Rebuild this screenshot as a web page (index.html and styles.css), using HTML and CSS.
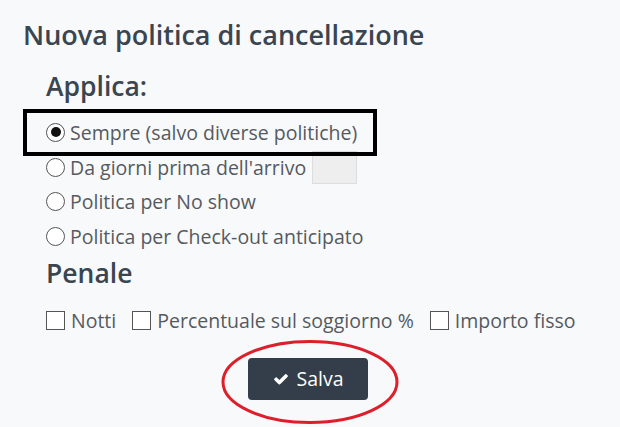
FILE: index.html
```html
<!DOCTYPE html>
<html lang="it">
<head>
<meta charset="utf-8">
<title>Nuova politica di cancellazione</title>
<link rel="stylesheet" href="styles.css">
</head>
<body>
<div class="page">
  <h1 class="title">Nuova politica di cancellazione</h1>
  <section class="block">
    <h2 class="label">Applica:</h2>
    <ul class="options">
      <li class="opt opt-marked"><span class="radio radio-on"></span>Sempre (salvo diverse politiche)</li>
      <li class="opt"><span class="radio"></span>Da giorni prima dell'arrivo <span class="days-input"></span></li>
      <li class="opt"><span class="radio"></span>Politica per No show</li>
      <li class="opt"><span class="radio"></span>Politica per Check-out anticipato</li>
    </ul>
    <h2 class="label label-penale">Penale</h2>
    <div class="checks">
      <span class="check"><span class="box"></span>Notti</span>
      <span class="check"><span class="box"></span>Percentuale sul soggiorno %</span>
      <span class="check"><span class="box"></span>Importo fisso</span>
    </div>
  </section>
  <div class="actions">
    <button class="btn-save" type="button">
      <svg class="icon-check" viewBox="0 0 1792 1792" aria-hidden="true"><path d="M1671 566q0 40-28 68l-724 724-136 136q-28 28-68 28t-68-28l-136-136-362-362q-28-28-28-68t28-68l136-136q28-28 68-28t68 28l294 295 656-657q28-28 68-28t68 28l136 136q28 28 28 68z" fill="#fff"/></svg>
      Salva
    </button>
    <svg class="ring" viewBox="0 0 180 86" aria-hidden="true"><ellipse cx="90" cy="43" rx="87" ry="40.5" fill="none" stroke="#dc1f2b" stroke-width="3"/></svg>
  </div>
</div>
</body>
</html>
```

FILE: styles.css
```css
html, body {
  margin: 0;
  padding: 0;
  background: #f8f9fb;
}

body {
  font-family: "Open Sans", "Liberation Sans", sans-serif;
  color: #555a60;
}

.page {
  width: 620px;
  height: 427px;
  padding: 20px 0 0 23px;
  box-sizing: border-box;
  overflow: hidden;
}

.title {
  margin: 0;
  font-size: 27px;
  line-height: 29px;
  font-weight: 600;
  color: #3a4550;
}

.block {
  margin: 23px 0 0 23px;
}

.label {
  margin: 0;
  font-size: 26.5px;
  line-height: 29px;
  font-weight: 600;
  color: #3a4550;
}

.options {
  list-style: none;
  margin: 14px 0 0 0;
  padding: 0;
}

.opt {
  display: flex;
  align-items: center;
  height: 34.7px;
  font-size: 19.5px;
  white-space: nowrap;
}

.opt-marked {
  position: relative;
}

.opt-marked::after {
  content: "";
  position: absolute;
  left: -23px;
  top: -6px;
  width: 346px;
  height: 39px;
  border: 4px solid #000;
}

.radio {
  width: 17px;
  height: 17px;
  border: 1px solid #555;
  border-radius: 50%;
  background: #fff;
  margin-right: 5px;
  box-sizing: content-box;
  display: inline-flex;
  align-items: center;
  justify-content: center;
  flex: none;
}

.radio-on::before {
  content: "";
  width: 10px;
  height: 10px;
  border-radius: 50%;
  background: #111;
}

.days-input {
  display: inline-block;
  width: 43px;
  height: 31px;
  margin-left: 6px;
  background: #eeeeee;
  border: 1px solid #dddddd;
}

.label-penale {
  margin-top: 5px;
}

.checks {
  display: flex;
  gap: 16px;
  margin-top: 16px;
  height: 34px;
  align-items: center;
  font-size: 19.5px;
  white-space: nowrap;
}

.check {
  display: inline-flex;
  align-items: center;
}

.box {
  width: 17px;
  height: 17px;
  border: 1px solid #555;
  background: #fff;
  margin-right: 6px;
  flex: none;
}

.actions {
  position: relative;
  margin: 20px 0 0 -23px;
  width: 620px;
  display: flex;
  justify-content: center;
}

.btn-save {
  display: inline-flex;
  align-items: center;
  gap: 7px;
  height: 42px;
  padding: 0 24px 0 25px;
  margin-right: 4px;
  border: none;
  border-radius: 4px;
  background: #333e4a;
  color: #fff;
  font-family: "Open Sans", "Liberation Sans", sans-serif;
  font-size: 19.5px;
  cursor: pointer;
}

.icon-check {
  width: 16px;
  height: 16px;
}

.ring {
  position: absolute;
  left: 220px;
  top: -19px;
  width: 180px;
  height: 86px;
  pointer-events: none;
}
```
